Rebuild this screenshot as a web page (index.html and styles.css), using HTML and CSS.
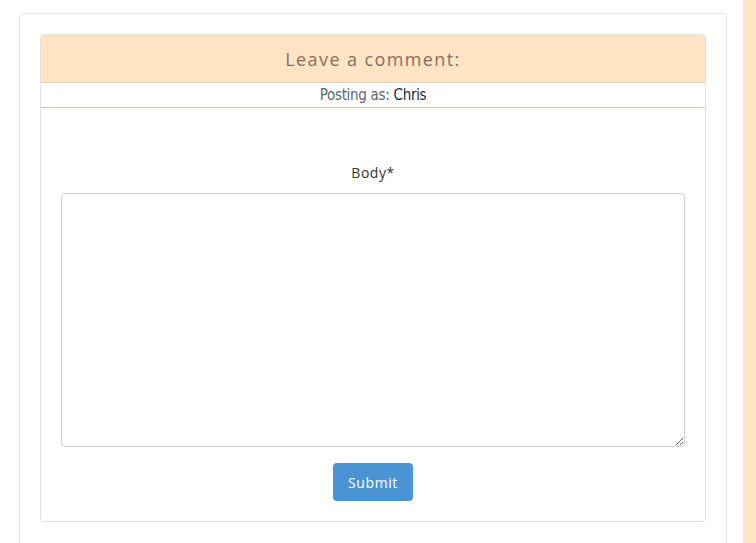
FILE: index.html
```html
<!DOCTYPE html>
<html>
<head>
<meta charset="utf-8">
<link rel="stylesheet" href="styles.css">
</head>
<body>
<div class="layout">
  <main class="main">
    <div class="outer-card">
      <div class="comment-card">
        <div class="comment-header">Leave a comment:</div>
        <div class="posting-as"><span class="posting-label">Posting as:</span> <span class="user">Chris</span></div>
        <form class="comment-form">
          <label class="field-label" for="body">Body*</label>
          <textarea id="body" class="field-textarea"></textarea>
          <button type="button" class="submit-btn">Submit</button>
        </form>
      </div>
    </div>
  </main>
  <aside class="sidebar"></aside>
</div>
</body>
</html>
```
FILE: styles.css
```css
html, body {
  margin: 0;
  padding: 0;
  background: #ffffff;
  font-family: "Open Sans", "Liberation Sans", sans-serif;
}
.layout {
  display: flex;
  height: 543px;
  overflow: hidden;
}
.main {
  width: 743px;
  flex: none;
  padding: 13px 0 0 19px;
  box-sizing: border-box;
}
.sidebar {
  flex: 1;
  background: #fde4c4;
}
.outer-card {
  width: 708px;
  box-sizing: border-box;
  border: 1px solid #e4e4e4;
  border-radius: 4px;
  padding: 20px 20px 40px 20px;
  height: 600px;
}
.comment-card {
  border: 1px solid #e2e2e2;
  border-radius: 4px;
  overflow: hidden;
}
.comment-header {
  background: #fde4c4;
  height: 47px;
  display: flex;
  align-items: center;
  justify-content: center;
  font-size: 18px;
  letter-spacing: 1.4px;
  color: #8b6c62;
  font-family: "Open Sans", sans-serif;
}
.posting-as {
  border-top: 1px solid #e6cdb6;
  border-bottom: 1px solid #d9c2ac;
  height: 24px;
  display: flex;
  align-items: center;
  justify-content: center;
  font-family: "DejaVu Sans Condensed", "DejaVu Sans", sans-serif;
  font-stretch: condensed;
  font-size: 15px;
  letter-spacing: -0.3px;
}
.posting-label {
  color: #5a6670;
}
.posting-as .user {
  margin-left: 4px;
  color: #1e2a33;
}
.comment-form {
  display: flex;
  flex-direction: column;
  align-items: center;
  padding: 55px 20px 20px 20px;
}
.field-label {
  font-size: 14px;
  color: #333333;
  letter-spacing: 0.5px;
  line-height: 20px;
  margin-bottom: 10px;
}
.field-textarea {
  width: 624px;
  height: 254px;
  box-sizing: border-box;
  border: 1px solid #cfcfcf;
  border-radius: 4px;
  resize: both;
  margin: 0 0 16px 0;
  display: block;
}
.submit-btn {
  width: 80px;
  height: 38px;
  background: #4a94d4;
  color: #ffffff;
  border: none;
  border-radius: 4px;
  font-family: "Open Sans", sans-serif;
  font-size: 14px;
  letter-spacing: 0.6px;
}
```
